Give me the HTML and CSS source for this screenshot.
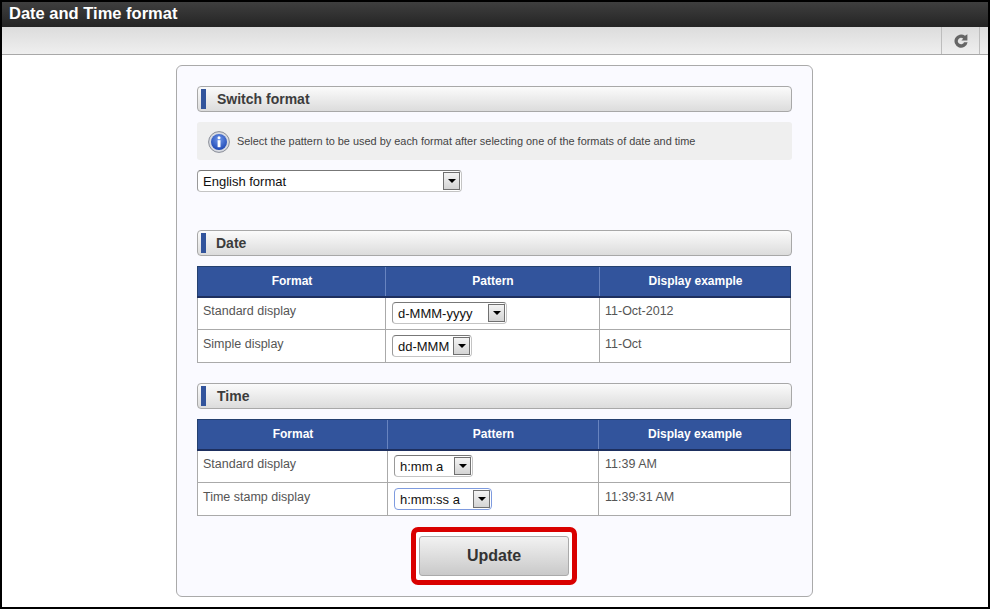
FILE: index.html
```html
<!DOCTYPE html>
<html lang="en">
<head>
<meta charset="utf-8">
<title>Date and Time format</title>
<link rel="stylesheet" href="styles.css">
</head>
<body>
<div class="frame">
  <header class="titlebar">Date and Time format</header>
  <div class="toolbar">
    <div class="tool-btn">
      <svg width="14" height="14" viewBox="0 0 14 14" aria-hidden="true"><path d="M13.6 8.2A6.6 6.6 0 1 1 11 1.8L13.4 0.2V6.6H7.4L9.2 4.7A3.2 3.2 0 1 0 10 8.2Z" fill="#666"/></svg>
    </div>
  </div>
  <main class="content">
    <section class="panel">
      <h2 class="head head-first"><span class="mark"></span><span class="head-text">Switch format</span></h2>
      <div class="info">
        <svg class="info-icon" width="22" height="22" viewBox="0 0 22 22" aria-hidden="true">
          <defs><radialGradient id="ig" cx="50%" cy="35%" r="65%"><stop offset="0" stop-color="#6f97ea"/><stop offset="1" stop-color="#1f48b4"/></radialGradient></defs>
          <circle cx="11" cy="11" r="10.4" fill="#d8dbe2" stroke="#8a8e98"/>
          <circle cx="11" cy="11" r="8" fill="url(#ig)"/>
          <circle cx="11" cy="6.8" r="1.5" fill="#fff"/>
          <rect x="9.6" y="9.2" width="2.9" height="7" fill="#fff"/>
        </svg>
        <span>Select the pattern to be used by each format after selecting one of the formats of date and time</span>
      </div>
      <div class="sel sel-wide"><span class="sel-text">English format</span><span class="arrow"></span></div>

      <h2 class="head head-date"><span class="mark"></span><span class="head-text head-text-date">Date</span></h2>
      <table class="grid grid-date">
        <thead><tr><th class="c1">Format</th><th class="c2">Pattern</th><th class="c3">Display example</th></tr></thead>
        <tbody>
          <tr><td>Standard display</td><td class="pick"><div class="sel sel-d1"><span class="sel-text">d-MMM-yyyy</span><span class="arrow"></span></div></td><td>11-Oct-2012</td></tr>
          <tr><td>Simple display</td><td class="pick"><div class="sel sel-d2"><span class="sel-text">dd-MMM</span><span class="arrow"></span></div></td><td>11-Oct</td></tr>
        </tbody>
      </table>

      <h2 class="head head-time"><span class="mark"></span><span class="head-text">Time</span></h2>
      <table class="grid grid-time">
        <thead><tr><th class="c1">Format</th><th class="c2">Pattern</th><th class="c3">Display example</th></tr></thead>
        <tbody>
          <tr><td>Standard display</td><td class="pick"><div class="sel sel-t1"><span class="sel-text">h:mm a</span><span class="arrow"></span></div></td><td>11:39 AM</td></tr>
          <tr><td>Time stamp display</td><td class="pick"><div class="sel sel-t2 sel-focus"><span class="sel-text">h:mm:ss a</span><span class="arrow"></span></div></td><td>11:39:31 AM</td></tr>
        </tbody>
      </table>

      <div class="actions">
        <div class="highlight"><button class="update" type="button">Update</button></div>
      </div>
    </section>
  </main>
</div>
</body>
</html>
```

FILE: styles.css
```css
* { box-sizing: border-box; }
html, body { margin: 0; height: 100%; }
body { font-family: "Liberation Sans", Arial, sans-serif; background: #fff; }

.frame {
  width: 990px;
  height: 609px;
  border: 2px solid #000;
  display: flex;
  flex-direction: column;
  overflow: hidden;
}

.titlebar {
  height: 25px;
  flex: none;
  background: linear-gradient(#3f3f3f, #242424);
  color: #fff;
  font-size: 16.5px;
  font-weight: bold;
  line-height: 23px;
  padding-left: 7px;
}

.toolbar {
  height: 28px;
  flex: none;
  background: linear-gradient(#dcdcdc, #efefef);
  border-bottom: 1px solid #a8a8a8;
  display: flex;
  justify-content: flex-end;
  padding-right: 8px;
}
.tool-btn {
  width: 39px;
  border-left: 1px solid #bdbdbd;
  border-right: 1px solid #bdbdbd;
  display: flex;
  align-items: center;
  justify-content: center;
}

.content {
  flex: 1;
  padding: 10px 175px 0 174px;
}

.panel {
  width: 637px;
  height: 532px;
  background: #fafaff;
  border: 1px solid #aaa;
  border-radius: 6px;
  padding: 20px 20px 0;
}

.head {
  margin: 0;
  height: 26px;
  width: 595px;
  background: linear-gradient(#fbfbfb, #dcdcdc);
  border: 1px solid #a8a8a8;
  border-radius: 4px;
  display: flex;
  align-items: center;
  padding-left: 3px;
  color: #3c3c3c;
  font-size: 14px;
  font-weight: bold;
}
.mark { width: 5px; height: 20px; background: #32549c; flex: none; }
.head-text { margin-left: 11px; }
.head-text-date { margin-left: 10px; }
.head-date { margin-top: 38px; }
.head-time { margin-top: 20px; }

.info {
  margin-top: 10px;
  height: 38px;
  background: #efefef;
  border-radius: 3px;
  display: flex;
  align-items: center;
  padding-left: 11px;
  color: #444;
  font-size: 10.93px;
}
.info-icon { flex: none; margin: 2px 7px 0 0; }

.sel {
  height: 22px;
  background: #fff;
  border: 1px solid;
  border-color: #777 #c4c4c4 #c4c4c4 #999;
  border-radius: 4px;
  display: flex;
  align-items: center;
  justify-content: space-between;
  padding: 0 1px 0 5px;
  color: #111;
  font-size: 13px;
}
.sel-wide { margin-top: 10px; width: 265px; }
.sel-d1 { width: 115px; }
.sel-d2 { width: 80px; }
.sel-t1 { width: 79px; }
.sel-t2 { width: 98px; }
.sel-focus { border-color: #7e9bdf; }
.arrow {
  width: 17px;
  height: 18px;
  flex: none;
  border: 1px solid #707070;
  background: linear-gradient(#f4f4f4, #d4d4d4);
  position: relative;
}
.arrow::after {
  content: "";
  position: absolute;
  left: 4px;
  top: 6px;
  border: 4px solid transparent;
  border-top: 4px solid #000;
  border-bottom: 0;
}

.grid {
  margin-top: 10px;
  width: 594px;
  border-collapse: collapse;
  table-layout: fixed;
  font-size: 12.5px;
  color: #555;
}
.grid th {
  height: 30px;
  background: #32549c;
  color: #fff;
  font-size: 12px;
  font-weight: bold;
  border-top: 1px solid #24406f;
  border-bottom: 2px solid #1d2f5f;
  border-left: 1px solid #6884c0;
  padding: 0 0 0 1px;
}
.grid th:first-child { border-left: 1px solid #24406f; }
.grid th:last-child { border-right: 1px solid #24406f; }
.grid td {
  height: 33px;
  background: #fff;
  border: 1px solid #aaa;
  padding: 0 5px 5px 5px;
  vertical-align: middle;
}
.grid td.pick { padding: 0 6px; }
.grid-date .c1 { width: 188px; }
.grid-date .c2 { width: 214px; }
.grid-time .c1 { width: 190px; }
.grid-time .c2 { width: 211px; }
.grid-time td:last-child { padding-left: 6px; }

.actions { display: flex; justify-content: center; margin-top: 11px; padding-right: 1px; }
.highlight {
  width: 166px;
  height: 58px;
  border: 5px solid #d90000;
  border-radius: 7px;
  background: #fff;
  padding: 4px 3px;
  display: flex;
  justify-content: center;
}
.update {
  width: 150px;
  height: 40px;
  background: linear-gradient(#f2f2f2, #c9c9c9);
  border: 1px solid #aaa;
  border-radius: 3px;
  color: #333;
  font-family: inherit;
  font-size: 16px;
  font-weight: bold;
  padding: 0;
}
```
